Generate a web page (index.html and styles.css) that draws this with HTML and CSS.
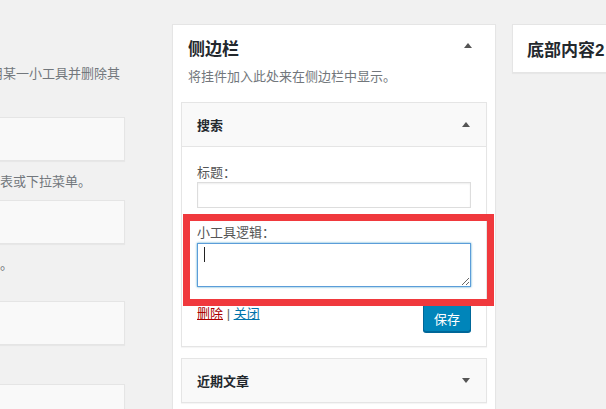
FILE: index.html
```html
<!DOCTYPE html>
<html lang="zh-CN">
<head>
    <meta charset="UTF-8">
    <meta name="viewport" content="width=device-width, initial-scale=1.0">
    <title>小工具</title>

<!--样式-->
<link rel="stylesheet" href="styles.css">

</head>
<body>
    <div id="tela">

        <!--未使用的小工具(页面向右滚动过,只看得见右边一截)-->
        <div id="inativos">
            <p class="desc primeira">将小工具拖至此处停用某一小工具并删除其<br>设置。</p>
            <div class="caixa"></div>
            <p class="desc">显示文章分类目录的列表或下拉菜单。</p>
            <div class="caixa"></div>
            <p class="desc alta">显示您最常用的标签云。</p>
            <div class="caixa"></div>
            <p class="desc">标签云。</p>
            <div class="caixa"></div>
        </div>

        <!--侧边栏-->
        <div id="sidebar">
            <div class="sidebar-topo">
                <h2>侧边栏</h2>
                <span class="toggle"><svg width="8" height="5" viewBox="0 0 8 5"><path d="M0 5 L4 0 L8 5 Z" fill="#555"/></svg></span>
            </div>
            <p class="sidebar-desc">将挂件加入此处来在侧边栏中显示。</p>

            <div class="widgets">
                <div class="widget aberto">
                    <div class="widget-topo">
                        <h3>搜索</h3>
                        <span class="toggle"><svg width="8" height="5" viewBox="0 0 8 5"><path d="M0 5 L4 0 L8 5 Z" fill="#555"/></svg></span>
                    </div>
                    <div class="widget-corpo">
                        <div class="campo">
                            <label>标题：</label>
                            <input type="text">
                        </div>
                        <div class="campo">
                            <label>小工具逻辑：</label>
                            <div class="area">
                                <textarea></textarea>
                                <span class="cursor"></span>
                            </div>
                        </div>
                        <div class="controles">
                            <div class="links"><a class="apagar">删除</a> | <a class="fechar">关闭</a></div>
                            <button class="salvar">保存</button>
                        </div>
                    </div>
                    <div id="destaque"></div>
                </div>

                <div class="widget">
                    <div class="widget-topo">
                        <h3>近期文章</h3>
                        <span class="toggle"><svg width="8" height="5" viewBox="0 0 8 5"><path d="M0 0 L8 0 L4 5 Z" fill="#555"/></svg></span>
                    </div>
                </div>
            </div>
        </div>

        <!--底部内容2-->
        <div id="rodape">
            <h2>底部内容2</h2>
        </div>
    </div>
</body>
</html>
```

FILE: styles.css
```css
* {
    font-family: "Liberation Sans", "Noto Sans CJK SC", sans-serif;
    box-sizing: border-box;
}
body {
    margin: 0;
    background-color: #f1f1f1;
    color: #444;
    font-size: 13px;
    overflow: hidden;
}

#tela {
    display: flex;
    align-items: flex-start;
    width: 1000px;
}

#inativos {
    width: 255px;
    margin-left: -130px;
    padding-top: 53px;
}

.desc {
    margin: 11px 0 8px 0;
    line-height: 20px;
    color: #72777c;
    white-space: nowrap;
}
.desc.primeira {
    margin-bottom: 13px;
    padding-left: 3px;
}
.desc.alta {
    margin-bottom: 26px;
}

.caixa {
    height: 44px;
    background-color: #f9f9f9;
    border: 1px solid #e5e5e5;
    box-shadow: 0 1px 1px rgba(0,0,0,.04);
}

#sidebar {
    width: 324px;
    margin: 24px 0 0 47px;
    background-color: #fff;
    border: 1px solid #e5e5e5;
    box-shadow: 0 1px 1px rgba(0,0,0,.04);
    padding-bottom: 20px;
}

.sidebar-topo {
    display: flex;
    justify-content: space-between;
    align-items: flex-start;
    padding: 13px 7px 0 15px;
}
.sidebar-topo h2 {
    margin: 0;
    font-size: 17px;
    line-height: 24px;
    font-weight: 700;
    color: #23282d;
}
.sidebar-topo .toggle {
    margin-top: 5px;
}

.toggle {
    width: 40px;
    display: flex;
    justify-content: center;
}
.toggle svg {
    display: block;
}

.sidebar-desc {
    margin: 5px 0 15px 15px;
    line-height: 20px;
    color: #72777c;
}

.widgets {
    padding: 0 8px;
}

.widget {
    position: relative;
    background-color: #fff;
    border: 1px solid #e5e5e5;
    box-shadow: 0 1px 1px rgba(0,0,0,.04);
    margin-bottom: 11px;
}

.widget-topo {
    display: flex;
    justify-content: space-between;
    align-items: center;
    height: 43px;
    padding-left: 15px;
    background-color: #f9f9f9;
}
.widget.aberto .widget-topo {
    height: 44px;
    border-bottom: 1px solid #e5e5e5;
}
.widget-topo h3 {
    margin: 0;
    font-size: 13px;
    font-weight: 700;
    color: #23282d;
}

.widget-corpo {
    padding: 17px 15px 14px 15px;
}

.campo + .campo {
    margin-top: 16px;
}
.campo label {
    display: block;
    line-height: 18px;
    color: #555;
}
.campo input {
    display: block;
    width: 100%;
    height: 26px;
    margin: 0;
    border: 1px solid #ddd;
    box-shadow: inset 0 1px 2px rgba(0,0,0,.07);
    background-color: #fff;
}

.area {
    position: relative;
    margin-top: 1px;
}
.area textarea {
    display: block;
    width: 100%;
    height: 44px;
    margin: 0;
    border: 1px solid #5b9dd9;
    box-shadow: 0 0 2px rgba(30,140,190,.8);
    background-color: #fff;
}
.cursor {
    position: absolute;
    left: 7px;
    top: 4px;
    width: 1px;
    height: 15px;
    background-color: #222;
}

.controles {
    display: flex;
    justify-content: space-between;
    align-items: flex-start;
    margin-top: 17px;
}
.links {
    line-height: 20px;
    color: #666;
}
.links a {
    text-decoration: underline;
}
.apagar {
    color: #a00;
}
.fechar {
    color: #0073aa;
}

.salvar {
    height: 28px;
    padding: 0 10px;
    font-size: 13px;
    color: #fff;
    background-color: #0085ba;
    border: 1px solid;
    border-color: #0073aa #006799 #006799;
    border-radius: 3px;
    box-shadow: 0 1px 0 #006799;
}

/*moldura vermelha de destaque por cima do campo*/
#destaque {
    position: absolute;
    left: 1px;
    top: 111px;
    width: 311px;
    height: 92px;
    border: 7px solid #f0393d;
}

#rodape {
    width: 324px;
    height: 49px;
    margin: 24px 0 0 16px;
    background-color: #fff;
    border: 1px solid #e5e5e5;
    box-shadow: 0 1px 1px rgba(0,0,0,.04);
    padding: 0 14px;
    display: flex;
    align-items: center;
}
#rodape h2 {
    margin: 0;
    font-size: 17px;
    font-weight: 700;
    color: #23282d;
}
```
